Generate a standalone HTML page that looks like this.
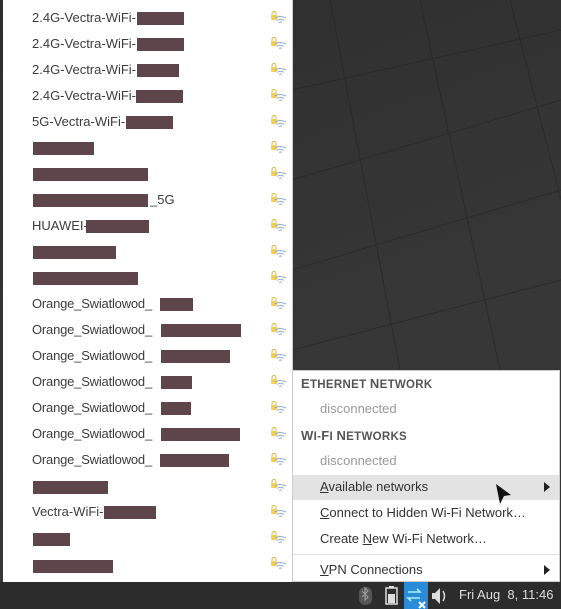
<!DOCTYPE html>
<html><head><meta charset="utf-8"><style>
body{margin:0;width:561px;height:609px;overflow:hidden;background:#333;font-family:"Liberation Sans",sans-serif;position:relative}
.bg{position:absolute;inset:0;background:linear-gradient(160deg,#2e2e2e,#373737 60%,#343434)}
.left{position:absolute;left:3px;top:0;width:289px;height:582px;background:#fff;border-right:1px solid #ccc}
.r{position:absolute;left:32px;font-size:13px;color:#3c3c3c;line-height:16px;white-space:nowrap}
.b{position:absolute;height:13px;background:#5e4549}
.right{position:absolute;left:292px;top:370px;width:268px;height:212px;background:#fff;border:1px solid #ccc;box-sizing:border-box}
.h{position:absolute;left:8px;font-size:11.5px;font-weight:bold;color:#555;letter-spacing:.3px}
.h span{font-size:13px}
.d{position:absolute;left:27px;font-size:13px;color:#999}
.m{position:absolute;left:27px;font-size:13px;color:#333}
.arr{position:absolute;right:9px;width:0;height:0;border-left:6px solid #222;border-top:5px solid transparent;border-bottom:5px solid transparent}
.task{position:absolute;left:0;top:582px;width:561px;height:27px;background:#2c2c2c}
</style></head><body>
<div class="bg"></div>
<svg width="561" height="582" style="position:absolute;left:0;top:0" stroke="#262626" stroke-width="1" fill="none" opacity="0.7">
<path d="M292 90 L561 30 M292 180 L561 100 M292 270 L561 190 M292 350 L561 280"/>
<path d="M330 0 L400 370 M420 0 L500 370 M510 0 L561 200"/>
</svg>
<div class="left"></div>
<svg width="0" height="0" style="position:absolute"><defs>
<g id="w"><rect x="1" y="4" width="6" height="5" fill="#f0cf5a" rx="1"/><path d="M2 4 v-1.5 a2 2 0 0 1 4 0 v1.5" stroke="#d9b640" fill="none"/>
<path d="M5 7 q5 -3 11 0 M7 9.5 q3.5 -2.5 7 0 M9 11.5 q1.5 -1 3 0" stroke="#8aaad8" stroke-width="1" fill="none"/></g></defs></svg>

<div class="r" style="top:10px">2.4G-Vectra-WiFi-</div><div class="b" style="left:137px;width:47px;top:12px"></div>
<div class="r" style="top:36px">2.4G-Vectra-WiFi-</div><div class="b" style="left:137px;width:47px;top:38px"></div>
<div class="r" style="top:62px">2.4G-Vectra-WiFi-</div><div class="b" style="left:137px;width:42px;top:64px"></div>
<div class="r" style="top:88px">2.4G-Vectra-WiFi-</div><div class="b" style="left:136px;width:47px;top:90px"></div>
<div class="r" style="top:114px">5G-Vectra-WiFi-</div><div class="b" style="left:126px;width:47px;top:116px"></div>
<div class="b" style="left:33px;width:61px;top:142px"></div>
<div class="b" style="left:33px;width:115px;top:168px"></div>
<div class="r" style="top:192px;left:150px">_5G</div><div class="b" style="left:33px;width:115px;top:194px"></div>
<div class="r" style="top:218px">HUAWEI-</div><div class="b" style="left:86px;width:63px;top:220px"></div>
<div class="b" style="left:33px;width:83px;top:246px"></div>
<div class="b" style="left:33px;width:105px;top:272px"></div>
<div class="r" style="top:296px;letter-spacing:-0.2px">Orange_Swiatlowod_</div><div class="b" style="left:160px;width:33px;top:298px"></div>
<div class="r" style="top:322px;letter-spacing:-0.2px">Orange_Swiatlowod_</div><div class="b" style="left:161px;width:80px;top:324px"></div>
<div class="r" style="top:348px;letter-spacing:-0.2px">Orange_Swiatlowod_</div><div class="b" style="left:161px;width:69px;top:350px"></div>
<div class="r" style="top:374px;letter-spacing:-0.2px">Orange_Swiatlowod_</div><div class="b" style="left:161px;width:31px;top:376px"></div>
<div class="r" style="top:400px;letter-spacing:-0.2px">Orange_Swiatlowod_</div><div class="b" style="left:161px;width:30px;top:402px"></div>
<div class="r" style="top:426px;letter-spacing:-0.2px">Orange_Swiatlowod_</div><div class="b" style="left:161px;width:79px;top:428px"></div>
<div class="r" style="top:452px;letter-spacing:-0.2px">Orange_Swiatlowod_</div><div class="b" style="left:160px;width:69px;top:454px"></div>
<div class="b" style="left:33px;width:75px;top:481px"></div>
<div class="r" style="top:504px">Vectra-WiFi-</div><div class="b" style="left:104px;width:52px;top:506px"></div>
<div class="b" style="left:33px;width:37px;top:533px"></div>
<div class="b" style="left:33px;width:80px;top:560px"></div>

<svg width="20" height="582" style="position:absolute;left:270px;top:0">
<use href="#w" y="11"/><use href="#w" y="37"/><use href="#w" y="63"/><use href="#w" y="89"/><use href="#w" y="115"/><use href="#w" y="141"/><use href="#w" y="167"/><use href="#w" y="193"/><use href="#w" y="219"/><use href="#w" y="245"/><use href="#w" y="271"/><use href="#w" y="297"/><use href="#w" y="323"/><use href="#w" y="349"/><use href="#w" y="375"/><use href="#w" y="401"/><use href="#w" y="427"/><use href="#w" y="453"/><use href="#w" y="479"/><use href="#w" y="505"/><use href="#w" y="531"/><use href="#w" y="557"/>
</svg>

<div class="right">
<div class="h" style="top:5px"><span>E</span>THERNET <span>N</span>ETWORK</div>
<div class="d" style="top:30px">disconnected</div>
<div class="h" style="top:57px"><span>W</span>I-<span>F</span>I <span>N</span>ETWORKS</div>
<div class="d" style="top:82px">disconnected</div>
<div style="position:absolute;left:0;top:104px;width:266px;height:25px;background:#e3e3e3"></div>
<div class="m" style="top:108px"><u>A</u>vailable networks</div><div class="arr" style="top:111px"></div>
<div class="m" style="top:134px"><u>C</u>onnect to Hidden Wi-Fi Network…</div>
<div class="m" style="top:160px">Create <u>N</u>ew Wi-Fi Network…</div>
<div style="position:absolute;left:0;top:183px;width:266px;height:1px;background:#ddd"></div>
<div class="m" style="top:191px"><u>V</u>PN Connections</div><div class="arr" style="top:194px"></div>
</div>
<svg width="18" height="22" style="position:absolute;left:495px;top:483px"><path d="M1 1 L16 12 L9 13 L5 21 Z" fill="#111"/></svg>

<div class="task">
<svg width="110" height="27" style="position:absolute;left:355px;top:0">
<rect x="4" y="5" width="13" height="18" rx="6" fill="#555"/><path d="M7 9 l6 6 l-3 3 v-12 l3 3 l-6 6" stroke="#999" fill="none" stroke-width="1.2"/>
<rect x="31" y="6" width="11" height="16" fill="none" stroke="#ddd" stroke-width="1.5"/><rect x="34" y="4" width="5" height="2" fill="#ddd"/><rect x="33" y="12" width="7" height="9" fill="#ddd"/>
<rect x="49" y="0" width="24" height="27" fill="#2a8cd8"/><path d="M53 10 h12 l-3 -3 M65 16 h-12 l3 3" stroke="#aee" stroke-width="1.6" fill="none"/><path d="M64 20 l6 6 M70 20 l-6 6" stroke="#fff" stroke-width="2"/>
<path d="M77 11 h3 l5 -5 v16 l-5 -5 h-3z" fill="#ddd"/><path d="M88 9 q3 5 0 10" stroke="#ddd" stroke-width="1.5" fill="none"/>
</svg>
<div style="position:absolute;left:459px;top:5px;font-size:13px;color:#ddd">Fri Aug &nbsp;8, 11:46</div>
</div>
</body></html>
